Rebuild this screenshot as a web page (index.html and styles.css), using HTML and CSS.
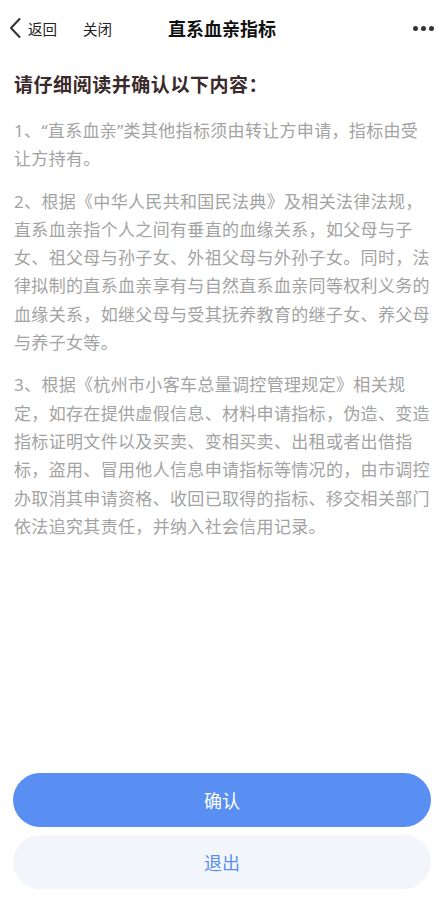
FILE: index.html
```html
<!DOCTYPE html>
<html lang="zh-CN">
<head>
<meta charset="utf-8">
<link rel="stylesheet" href="styles.css">
</head>
<body>
<div class="page">
  <header class="nav">
    <div class="nav-left">
      <span class="back">
        <svg class="chev" width="14" height="22" viewBox="0 0 14 22"><path d="M11.5 2 L3 11 L11.5 20" fill="none" stroke="#333" stroke-width="2" stroke-linecap="round" stroke-linejoin="round"/></svg>
        <span class="nav-txt">返回</span>
      </span>
      <span class="nav-txt close">关闭</span>
    </div>
    <div class="nav-title">直系血亲指标</div>
    <div class="nav-right">
      <span class="dot"></span><span class="dot"></span><span class="dot"></span>
    </div>
  </header>
  <main class="content">
    <h1 class="heading">请仔细阅读并确认以下内容：</h1>
    <p class="para">1、“直系血亲”类其他指标须由转让方申请，指标由受让方持有。</p>
    <p class="para">2、根据《中华人民共和国民法典》及相关法律法规，直系血亲指个人之间有垂直的血缘关系，如父母与子女、祖父母与孙子女、外祖父母与外孙子女。同时，法律拟制的直系血亲享有与自然直系血亲同等权利义务的血缘关系，如继父母与受其抚养教育的继子女、养父母与养子女等。</p>
    <p class="para">3、根据《杭州市小客车总量调控管理规定》相关规定，如存在提供虚假信息、材料申请指标，伪造、变造指标证明文件以及买卖、变相买卖、出租或者出借指标，盗用、冒用他人信息申请指标等情况的，由市调控办取消其申请资格、收回已取得的指标、移交相关部门依法追究其责任，并纳入社会信用记录。</p>
  </main>
  <footer class="actions">
    <button class="btn btn-primary">确认</button>
    <button class="btn btn-secondary">退出</button>
  </footer>
</div>
</body>
</html>
```

FILE: styles.css
```css
* { box-sizing: border-box; }
html, body { margin: 0; padding: 0; background: #fff; }
body {
  font-family: "Noto Sans", "Noto Sans CJK SC", sans-serif;
  width: 444px;
  height: 910px;
  overflow: hidden;
}
.page {
  display: flex;
  flex-direction: column;
  height: 910px;
}
.nav {
  height: 56px;
  display: flex;
  align-items: center;
  position: relative;
  padding: 0 10px 0 8px;
}
.nav-left {
  display: flex;
  align-items: center;
  gap: 26px;
  flex: 1;
}
.back {
  display: flex;
  align-items: center;
  gap: 6px;
}
.chev { display: block; }
.nav-txt {
  font-size: 14.5px;
  color: #222;
}
.nav-title {
  position: absolute;
  left: 0;
  right: 0;
  text-align: center;
  font-size: 18px;
  font-weight: 700;
  color: #111;
  pointer-events: none;
}
.nav-right {
  display: flex;
  gap: 3px;
  align-items: center;
}
.dot {
  width: 5px;
  height: 5px;
  border-radius: 50%;
  background: #333;
}
.content {
  flex: 1;
  padding: 14px 14px 0 14px;
}
.heading {
  margin: 0 0 17px 0;
  font-size: 19px;
  font-weight: 700;
  color: #3a2a2b;
  letter-spacing: 0.55px;
  line-height: 30px;
}
.para {
  margin: 0 0 14px 0;
  font-size: 17px;
  letter-spacing: 0.33px;
  line-height: 28.3px;
  color: #a3a3a3;
}
.actions {
  display: flex;
  flex-direction: column;
  gap: 8px;
  padding: 0 13px 21px 13px;
}
.btn {
  height: 54px;
  border: none;
  border-radius: 27px;
  font-family: "Noto Sans", "Noto Sans CJK SC", sans-serif;
  font-size: 18px;
}
.btn-primary {
  background: #598ff3;
  color: #fff;
}
.btn-secondary {
  background: #f2f6fa;
  color: #5a8ff1;
}
```
